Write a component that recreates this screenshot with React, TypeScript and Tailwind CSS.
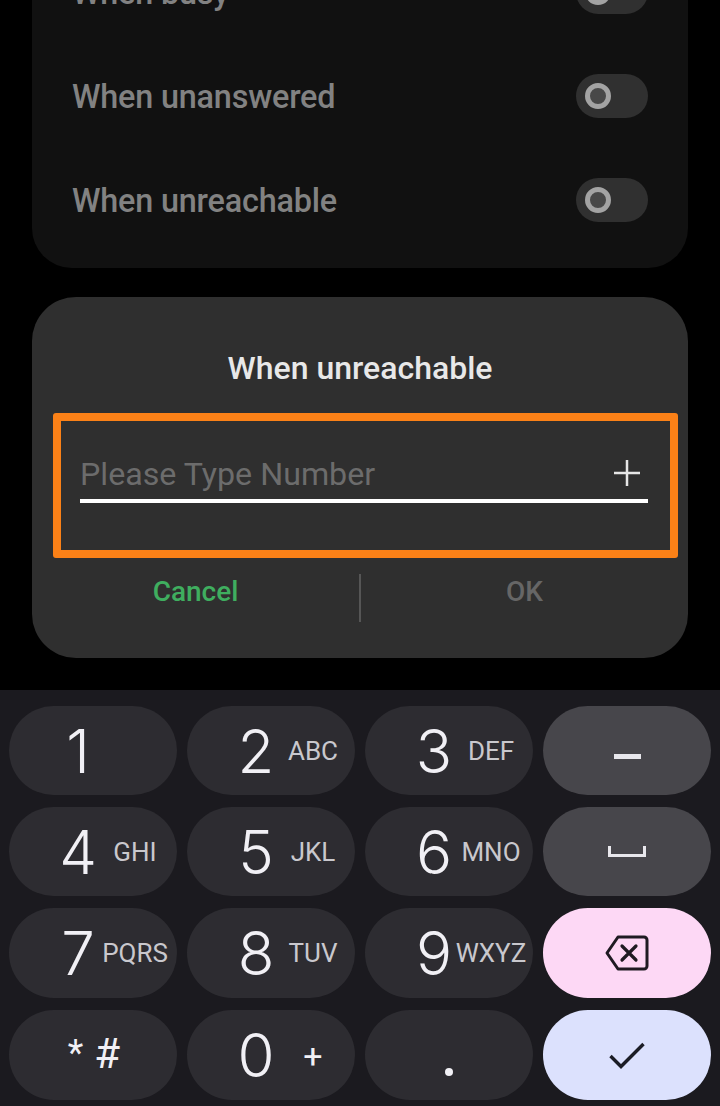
const sans = "font-['Roboto','Liberation_Sans',sans-serif]";

function Toggle() {
  return (
    <div className="w-[72px] h-[44px] -mt-[2px] rounded-full bg-[#303030] flex items-center pl-[9px] shrink-0">
      <div className="w-[26px] h-[26px] rounded-full border-[5px] border-[#a3a3a3] bg-[#484848]" />
    </div>
  );
}

function SettingRow({ label }: { label: string }) {
  return (
    <div className="h-[104px] flex items-center justify-between">
      <span className="pt-[1px] text-[32.4px] font-medium text-[#828282] tracking-[-0.2px]">{label}</span>
      <Toggle />
    </div>
  );
}

function NumKey({ digit, sub, subLarge }: { digit: string; sub?: string; subLarge?: boolean }) {
  return (
    <div className="rounded-full bg-[#2d2c31] grid grid-cols-[84px_54px_30px] items-center">
      <span className="col-start-1 col-span-2 row-start-1 text-center font-['Inter','Roboto',sans-serif] text-[60px] leading-none font-light text-[#f1f0f5]">
        {digit}
      </span>
      {sub && (
        <span
          className={
            subLarge
              ? "col-start-1 col-span-3 row-start-1 pl-[84px] pt-[2px] text-center text-[34px] leading-none text-[#f1f0f5]"
              : "col-start-1 col-span-3 row-start-1 pl-[84px] text-center text-[26px] leading-none text-[#c9c8cd] whitespace-nowrap"
          }
        >
          {sub}
        </span>
      )}
    </div>
  );
}

export default function App() {
  return (
    <div className={`${sans} w-[720px] h-[1106px] bg-black overflow-hidden flex flex-col justify-end`}>
      <div className="mx-8 shrink-0 bg-[#111111] rounded-b-[40px] px-10 pb-[15px]">
        <SettingRow label="When busy" />
        <SettingRow label="When unanswered" />
        <SettingRow label="When unreachable" />
      </div>

      <div className="mx-8 mt-[29px] shrink-0 h-[361px] bg-[#2f2f2f] rounded-[44px] flex flex-col">
        <div className="h-[116px] pt-[26px] flex items-center justify-center text-[32px] font-medium text-[#e8e8e8]">
          When unreachable
        </div>
        <div className="ml-[21px] mr-[10px] h-[145px] border-[8px] border-[#fb8117] rounded-[3px] pl-[19px] pr-[22px] pt-[28px]">
          <div className="h-[54px] border-b-[4px] border-white flex items-center justify-between">
            <span className="text-[32.2px] text-[#6c6c6c]">Please Type Number</span>
            <svg width="28" height="28" viewBox="0 0 28 28" className="mr-[7px] -mt-[2px]" fill="none" stroke="#e6e6e6" strokeWidth="2.5">
              <path d="M14 1v26M1 14h26" />
            </svg>
          </div>
        </div>
        <div className="flex h-[100px] pt-[16px]">
          <div className="w-[327px] h-[36px] flex items-center justify-center text-[28px] font-medium text-[#3fae5f]">
            Cancel
          </div>
          <div className="w-[2px] h-[48px] bg-[#565656]" />
          <div className="flex-1 h-[36px] flex items-center justify-center text-[28px] font-medium text-[#666666]">
            OK
          </div>
        </div>
      </div>

      <div className="mt-[32px] shrink-0 h-[416px] bg-[#1b1a1f] px-[9px] pt-4 pb-[6px] grid grid-cols-4 gap-x-[10px] gap-y-3 grid-rows-[89px_89px_90px_90px]">
        <NumKey digit="1" />
        <NumKey digit="2" sub="ABC" />
        <NumKey digit="3" sub="DEF" />
        <div className="rounded-full bg-[#47464b] flex items-center justify-center pt-[11px]">
          <div className="w-[27px] h-[5px] bg-[#e8e7ec]" />
        </div>

        <NumKey digit="4" sub="GHI" />
        <NumKey digit="5" sub="JKL" />
        <NumKey digit="6" sub="MNO" />
        <div className="rounded-full bg-[#47464b] flex items-center justify-center">
          <svg width="38" height="11" viewBox="0 0 38 11" fill="none" stroke="#e8e7ec" strokeWidth="3">
            <path d="M1.5 0v9.5h35V0" />
          </svg>
        </div>

        <NumKey digit="7" sub="PQRS" />
        <NumKey digit="8" sub="TUV" />
        <NumKey digit="9" sub="WXYZ" />
        <div className="rounded-full bg-[#fdd8f5] flex items-center justify-center">
          <svg width="44" height="36" viewBox="0 0 44 36" fill="none" stroke="#1f1a22" strokeWidth="3" strokeLinejoin="round">
            <path d="M13 2h26a3 3 0 0 1 3 3v26a3 3 0 0 1-3 3H13L2 18Z" />
            <path d="M17 11l14 14M31 11L17 25" strokeLinecap="round" strokeWidth="3.2" />
          </svg>
        </div>

        <div className="rounded-full bg-[#2d2c31] flex items-center justify-center pl-[2px] pb-[3px] gap-[11px] text-[#f1f0f5]">
          <span className="text-[36px] leading-none font-normal pb-[2px]">*</span>
          <span className="text-[42px] leading-none font-normal">#</span>
        </div>
        <NumKey digit="0" sub="+" subLarge />
        <div className="rounded-full bg-[#2d2c31] flex items-end justify-center pb-[24px]">
          <div className="w-[8px] h-[8px] rounded-full bg-[#f1f0f5]" />
        </div>
        <div className="rounded-full bg-[#dce1fd] flex items-center justify-center">
          <svg width="36" height="27" viewBox="0 0 36 27" fill="none" stroke="#1b1c25" strokeWidth="3.4">
            <path d="M1.5 14l10.5 10.5L34.5 2" />
          </svg>
        </div>
      </div>
    </div>
  );
}
